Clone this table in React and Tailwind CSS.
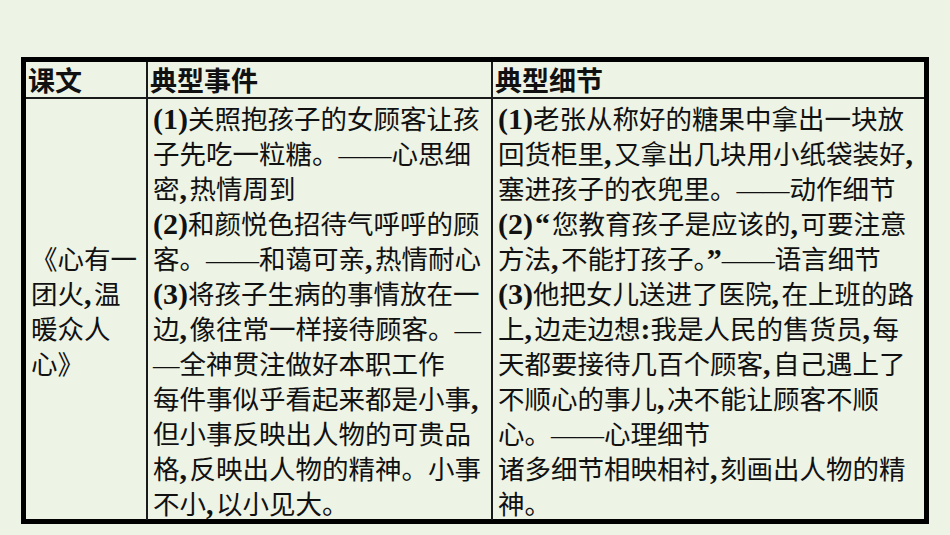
import React from "react";

const LAT = "()0123456789:”";

function Line({ text }) {
  const parts = [];
  let buf = "";
  const flush = (k) => {
    if (buf) {
      parts.push(<span key={"c" + k}>{buf}</span>);
      buf = "";
    }
  };
  [...text].forEach((c, i) => {
    if (c === ",") {
      flush(i);
      parts.push(
        <span
          key={i}
          className="inline-block w-[10px] font-bold text-[30px] leading-none font-['Liberation_Serif',serif]"
        >
          ,
        </span>
      );
    } else if (c === "—") {
      flush(i);
      parts.push(
        <span
          key={i}
          className="text-[26.5px] leading-none font-['Liberation_Serif',serif]"
        >
          —
        </span>
      );
    } else if (c === "“") {
      flush(i);
      parts.push(
        <span
          key={i}
          className="inline-block w-[19px] pl-[2px] font-bold text-[30px] leading-none font-['Liberation_Serif',serif]"
        >
          “
        </span>
      );
    } else if (LAT.includes(c)) {
      flush(i);
      parts.push(
        <span
          key={i}
          className="font-bold text-[30px] leading-none font-['Liberation_Serif',serif]"
        >
          {c}
        </span>
      );
    } else {
      buf += c;
    }
  });
  flush("end");
  return <div className="whitespace-nowrap h-[35px]">{parts}</div>;
}

const col1 = ["《心有一", "团火,温", "暖众人", "心》"];

const col2 = [
  "(1)关照抱孩子的女顾客让孩",
  "子先吃一粒糖。——心思细",
  "密,热情周到",
  "(2)和颜悦色招待气呼呼的顾",
  "客。——和蔼可亲,热情耐心",
  "(3)将孩子生病的事情放在一",
  "边,像往常一样接待顾客。—",
  "—全神贯注做好本职工作",
  "每件事似乎看起来都是小事,",
  "但小事反映出人物的可贵品",
  "格,反映出人物的精神。小事",
  "不小,以小见大。",
];

const col3 = [
  "(1)老张从称好的糖果中拿出一块放",
  "回货柜里,又拿出几块用小纸袋装好,",
  "塞进孩子的衣兜里。——动作细节",
  "(2)“您教育孩子是应该的,可要注意",
  "方法,不能打孩子。”——语言细节",
  "(3)他把女儿送进了医院,在上班的路",
  "上,边走边想:我是人民的售货员,每",
  "天都要接待几百个顾客,自己遇上了",
  "不顺心的事儿,决不能让顾客不顺",
  "心。——心理细节",
  "诸多细节相映相衬,刻画出人物的精",
  "神。",
];

export default function App() {
  return (
    <div className="w-[950px] h-[535px] bg-[#edf3e5] pt-[57px] pl-[21px] font-['Noto_Sans_CJK_SC',sans-serif] text-[26.5px] leading-[35px] text-[#111]">
      <div className="w-[908px] h-[467px] border-[5px] border-black flex flex-col">
        <div className="flex h-[37px] border-b-2 border-[#1a1a1a] font-bold text-[27px]">
          <div className="w-[122px] border-r-2 border-[#1a1a1a] pl-[2px] leading-[35px]">课文</div>
          <div className="w-[345px] border-r-2 border-[#1a1a1a] pl-[2px] leading-[35px]">典型事件</div>
          <div className="flex-1 pl-[2px] leading-[35px]">典型细节</div>
        </div>
        <div className="flex flex-1">
          <div className="w-[122px] border-r-2 border-[#1a1a1a] pl-[5px] flex flex-col justify-center">
            {col1.map((l, i) => (
              <Line key={i} text={l} />
            ))}
          </div>
          <div className="w-[345px] border-r-2 border-[#1a1a1a] pl-[5px] pt-[1px]">
            {col2.map((l, i) => (
              <Line key={i} text={l} />
            ))}
          </div>
          <div className="flex-1 pl-[5px] pt-[1px]">
            {col3.map((l, i) => (
              <Line key={i} text={l} />
            ))}
          </div>
        </div>
      </div>
    </div>
  );
}
